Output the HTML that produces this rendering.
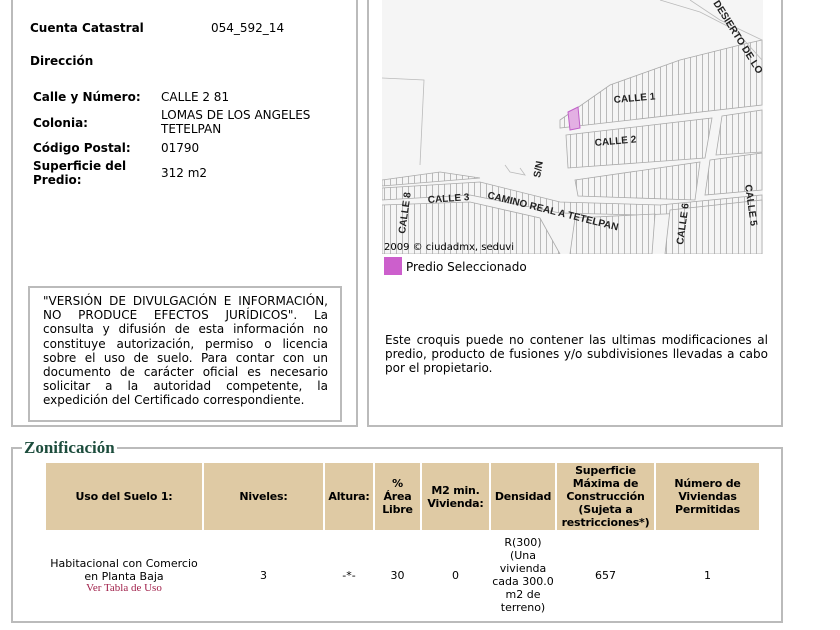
<!DOCTYPE html>
<html><head><meta charset="utf-8"><style>
*{margin:0;padding:0;box-sizing:border-box}
body{width:840px;height:630px;background:#fff;position:relative;overflow:hidden;font-family:"DejaVu Sans","Liberation Sans",sans-serif;color:#000}
.a{position:absolute}
.b{font-weight:bold;font-size:12px}
.t{font-size:12px}
.panel{position:absolute;border:2px solid #bbb;border-top:none}
.th{position:absolute;background:#dfcaa4;font-weight:bold;font-size:11px;display:flex;align-items:center;justify-content:center;text-align:center;line-height:13px;letter-spacing:-0.2px}
.td{position:absolute;font-size:11px;text-align:center;line-height:13px;display:flex;align-items:center;justify-content:center;flex-direction:column}
</style></head><body>
<div class="panel" style="left:11px;top:-2px;width:347px;height:429px"></div>
<div class="panel" style="left:367px;top:-2px;width:416px;height:429px"></div>

<div class="a b" style="left:30px;top:21px">Cuenta Catastral</div>
<div class="a t" style="left:211px;top:21px">054_592_14</div>
<div class="a b" style="left:30px;top:54px">Dirección</div>
<div class="a b" style="left:33px;top:90px">Calle y Número:</div>
<div class="a t" style="left:161px;top:90px">CALLE 2 81</div>
<div class="a b" style="left:33px;top:116px">Colonia:</div>
<div class="a t" style="left:161px;top:108px;line-height:14px">LOMAS DE LOS ANGELES<br>TETELPAN</div>
<div class="a b" style="left:33px;top:141px">Código Postal:</div>
<div class="a t" style="left:161px;top:141px">01790</div>
<div class="a b" style="left:33px;top:159px;line-height:14px">Superficie del<br>Predio:</div>
<div class="a t" style="left:161px;top:166px">312 m2</div>

<div class="a" style="left:28px;top:286px;width:314px;height:136px;border:2px solid #bbb"></div>
<div class="a" style="left:43px;top:294px;width:285px;font-size:12px;line-height:14.2px;text-align:justify">"VERSIÓN DE DIVULGACIÓN E INFORMACIÓN, NO PRODUCE EFECTOS JURÍDICOS". La consulta y difusión de esta información no constituye autorización, permiso o licencia sobre el uso de suelo. Para contar con un documento de carácter oficial es necesario solicitar a la autoridad competente, la expedición del Certificado correspondiente.</div>

<svg class="a" style="left:382px;top:0" width="381" height="254" viewBox="382 0 381 254">
<defs><pattern id="v" width="6" height="10" patternUnits="userSpaceOnUse"><rect width="6" height="10" fill="#f5f5f5"/><line x1="0.5" y1="0" x2="0.5" y2="10" stroke="#aaa" stroke-width="0.8"/></pattern></defs>
<rect x="382" y="0" width="381" height="254" fill="#f5f5f5"/>
<g stroke="#aaa" stroke-width="0.8" fill="url(#v)">
<polygon points="560,120 610,85 680,60 740,45 762,40 762,105 560,128"/>
<polygon points="566,135 712,118 705,158 568,168"/>
<polygon points="722,116 762,110 762,152 716,155"/>
<polygon points="575,180 700,162 695,200 578,196"/>
<polygon points="710,160 762,153 762,190 705,195"/>
<polygon points="382,188 480,182 560,202 660,205 762,195 762,210 640,215 560,213 470,195 382,200"/>
<polygon points="382,205 470,202 540,218 560,254 382,254"/>
<polygon points="575,218 655,214 652,254 570,254"/>
<polygon points="670,210 762,200 762,254 665,254"/>
<polygon points="382,180 440,172 480,178 382,186"/>
</g>
<g stroke="#bbb" stroke-width="0.8" fill="none">
<polyline points="382,78 424,80 420,165"/>
<polyline points="660,0 700,12 735,30 762,60"/>
<polyline points="690,0 720,20 762,40"/>
<polyline points="505,165 510,172 525,175 520,168"/>
</g>
<polygon points="568,112 578,107 580,128 570,130" fill="#e3b0e3" stroke="#c060c8" stroke-width="1"/>
<g font-family="'Liberation Sans',sans-serif" font-weight="bold" font-size="10" fill="#222">
<text x="614" y="103" transform="rotate(-5 614 103)">CALLE 1</text>
<text x="595" y="146" transform="rotate(-5 595 146)">CALLE 2</text>
<text x="428" y="203" transform="rotate(-4 428 203)">CALLE 3</text>
<text x="487" y="198" transform="rotate(14 487 198)">CAMINO REAL A TETELPAN</text>
<text x="405" y="234" transform="rotate(-82 405 234)">CALLE 8</text>
<text x="683" y="245" transform="rotate(-82 683 245)">CALLE 6</text>
<text x="745" y="185" transform="rotate(82 745 185)">CALLE 5</text>
<text x="540" y="178" transform="rotate(-80 540 178)">S/N</text>
<text x="713" y="3" transform="rotate(58 713 3)">DESIERTO DE LO</text>
</g>
<text x="384" y="250" font-family="'DejaVu Sans',sans-serif" font-size="10" fill="#000">2009 © ciudadmx, seduvi</text>
</svg>
<div class="a" style="left:384px;top:257px;width:18px;height:18px;background:#cc5fcc"></div>
<div class="a t" style="left:406px;top:260px">Predio Seleccionado</div>
<div class="a" style="left:385px;top:333px;width:383px;font-size:12px;line-height:14px;text-align:justify">Este croquis puede no contener las ultimas modificaciones al predio, producto de fusiones y/o subdivisiones llevadas a cabo por el propietario.</div>

<div class="a" style="left:11px;top:447px;width:772px;height:176px;border:2px solid #bbb"></div>
<div class="a" style="left:22px;top:438px;background:#fff;padding:0 2px;font-family:'Liberation Serif',serif;font-weight:bold;font-size:17px;color:#1d4d3d">Zonificación</div>

<div class="th" style="left:46px;top:463px;width:156px;height:67px">Uso del Suelo 1:</div>
<div class="th" style="left:204px;top:463px;width:119px;height:67px">Niveles:</div>
<div class="th" style="left:325px;top:463px;width:48px;height:67px">Altura:</div>
<div class="th" style="left:375px;top:463px;width:45px;height:67px">%<br>Área<br>Libre</div>
<div class="th" style="left:422px;top:463px;width:67px;height:67px">M2 min.<br>Vivienda:</div>
<div class="th" style="left:491px;top:463px;width:64px;height:67px">Densidad</div>
<div class="th" style="left:557px;top:463px;width:97px;height:67px">Superficie<br>Máxima de<br>Construcción<br>(Sujeta a<br>restricciones*)</div>
<div class="th" style="left:656px;top:463px;width:103px;height:67px">Número de<br>Viviendas<br>Permitidas</div>

<div class="td" style="left:46px;top:535px;width:156px;height:80px">Habitacional con Comercio<br>en Planta Baja<span style="font-family:'Liberation Serif',serif;color:#a0204a;font-size:11px;line-height:11px">Ver Tabla de Uso</span></div>
<div class="td" style="left:204px;top:535px;width:119px;height:80px">3</div>
<div class="td" style="left:325px;top:535px;width:48px;height:80px">-*-</div>
<div class="td" style="left:375px;top:535px;width:45px;height:80px">30</div>
<div class="td" style="left:422px;top:535px;width:67px;height:80px">0</div>
<div class="td" style="left:491px;top:535px;width:64px;height:80px">R(300)<br>(Una<br>vivienda<br>cada 300.0<br>m2 de<br>terreno)</div>
<div class="td" style="left:557px;top:535px;width:97px;height:80px">657</div>
<div class="td" style="left:656px;top:535px;width:103px;height:80px">1</div>
</body></html>
